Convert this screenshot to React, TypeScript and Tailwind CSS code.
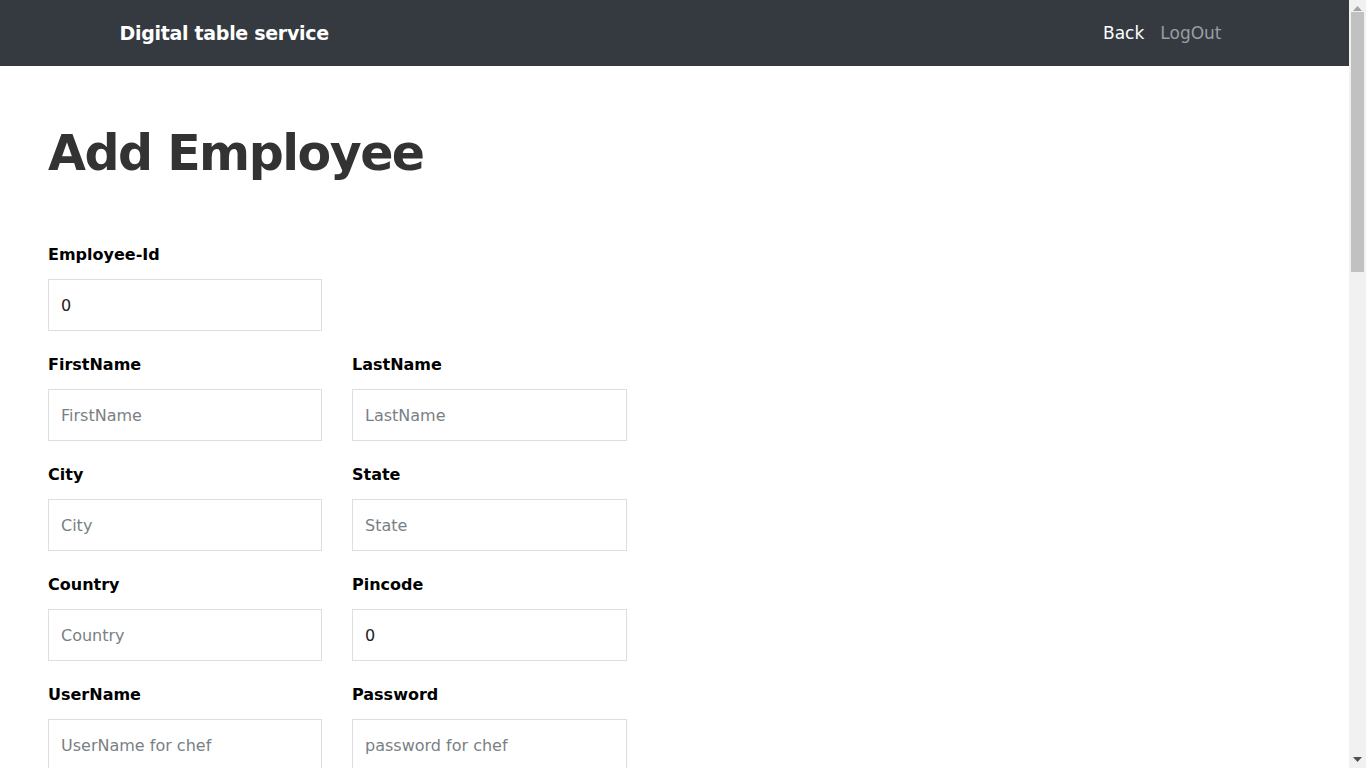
import React from 'react';

const font = { fontFamily: '"DejaVu Sans", "Open Sans", sans-serif' };

interface Field {
  label: string;
  placeholder?: string;
  value?: string;
}

const rows: Field[][] = [
  [{ label: 'Employee-Id', value: '0' }],
  [
    { label: 'FirstName', placeholder: 'FirstName' },
    { label: 'LastName', placeholder: 'LastName' },
  ],
  [
    { label: 'City', placeholder: 'City' },
    { label: 'State', placeholder: 'State' },
  ],
  [
    { label: 'Country', placeholder: 'Country' },
    { label: 'Pincode', value: '0' },
  ],
  [
    { label: 'UserName', placeholder: 'UserName for chef' },
    { label: 'Password', placeholder: 'password for chef' },
  ],
];

function FormField({ field }: { field: Field }) {
  return (
    <div>
      <label className="block text-[16px] font-semibold text-black leading-[24px] mb-[12px]">{field.label}</label>
      <input
        type="text"
        defaultValue={field.value}
        placeholder={field.placeholder}
        className="w-full h-[52px] px-[12px] border border-[#dedede] text-[16px] text-[#222] placeholder-[#7a7f85] outline-none"
        style={font}
      />
    </div>
  );
}

// fake browser scrollbar, like the one in the screenshot
function ScrollBar() {
  return (
    <div className="w-[17px] h-screen bg-[#f1f1f1] flex flex-col items-center shrink-0">
      <div className="h-[17px] flex items-center justify-center">
        <svg width="9" height="5" viewBox="0 0 9 5">
          <path d="M0 5 L4.5 0 L9 5 Z" fill="#a3a3a3" />
        </svg>
      </div>
      <div className="w-[13px] h-[260px] bg-[#c1c1c1] -mt-[5px]" />
      <div className="flex-1" />
      <div className="h-[17px] flex items-center justify-center">
        <svg width="9" height="5" viewBox="0 0 9 5">
          <path d="M0 0 L9 0 L4.5 5 Z" fill="#505050" />
        </svg>
      </div>
    </div>
  );
}

export default function App() {
  return (
    <div className="h-screen flex overflow-hidden bg-white" style={font}>
      <div className="flex-1 min-w-0 h-screen overflow-hidden">
        <div className="min-h-[2150px]">
          <nav className="h-[66px] bg-[#343a40]">
            <div className="max-w-[1140px] mx-auto px-[15px] h-full flex items-center justify-between pt-[1px]">
              <span className="text-white text-[19px] font-bold tracking-[-0.3px]">Digital table service</span>
              <div className="flex items-center text-[17px]">
                <a className="px-2 text-white">Back</a>
                <a className="px-2 text-[#9a9da0]">LogOut</a>
              </div>
            </div>
          </nav>
          <main className="px-[48px] pt-[52px]">
            <h1 className="text-[49px] font-extrabold text-[#333] leading-[72px] tracking-[-1.5px]">Add Employee</h1>
            <div className="mt-[53px] grid grid-cols-[274px_275px] gap-x-[30px] gap-y-[22px]">
              {rows.map((row, i) => (
                <React.Fragment key={i}>
                  {row.map((f) => (
                    <FormField key={f.label} field={f} />
                  ))}
                  {row.length === 1 && <div />}
                </React.Fragment>
              ))}
            </div>
          </main>
        </div>
      </div>
      <ScrollBar />
    </div>
  );
}
